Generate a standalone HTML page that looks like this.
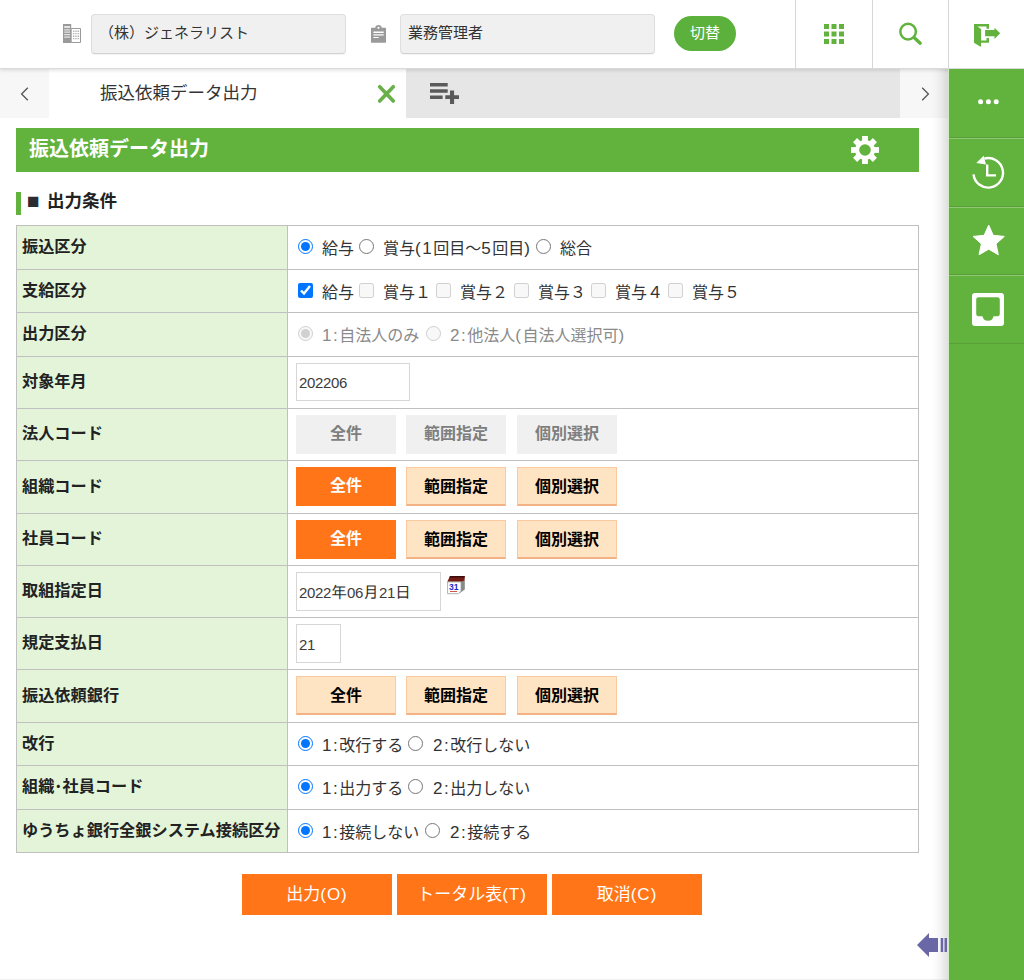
<!DOCTYPE html>
<html lang="ja">
<head>
<meta charset="utf-8">
<meta name="viewport" content="width=1024">
<title>振込依頼データ出力</title>
<style>
*{box-sizing:border-box;margin:0;padding:0}
html,body{width:1024px;height:980px;overflow:hidden;background:#fff}
body{position:relative;font-family:"Liberation Sans","Noto Sans CJK JP",sans-serif;font-size:16px;color:#333;line-height:1}
svg{display:block;position:absolute;overflow:visible}
button{font-family:inherit;border:0;border-radius:0;cursor:pointer;-webkit-appearance:none;appearance:none}
ul{list-style:none}

/* header */
#header{position:absolute;left:0;top:0;width:1024px;height:69px;background:#fff;border-bottom:1px solid #dadada;z-index:5;box-shadow:0 1px 4px rgba(0,0,0,.15)}
.hbox{position:absolute;top:14px;height:40px;width:255px;padding-left:7px;background:#f0f0f0;border:1px solid #dedede;border-bottom-color:#d2d2d2;border-radius:4px;box-shadow:0 1px 1px rgba(0,0,0,.05);font-size:15px;color:#333;line-height:36px;white-space:nowrap}
#switch{position:absolute;left:674px;top:16px;width:62px;height:35px;border-radius:18px;background:#5cb03c;color:#fff;font-size:15px;line-height:20px;text-align:center;padding:0 0 2px}
.hdiv{position:absolute;top:0;width:1px;height:68px;background:#d6d6d6}

/* tab bar */
#tabs{position:absolute;left:0;top:69px;width:949px;height:49px;background:#e6e6e6}
#tabs .arrow{position:absolute;top:0;width:49px;height:49px;background:#f7f7f7}
#tabs .active{position:absolute;left:49px;top:0;width:357px;height:49px;background:#fff}
#tabname{position:absolute;left:51px;top:14px;font-size:17.5px;color:#333;white-space:nowrap;line-height:20px}

/* sidebar */
#side{position:absolute;left:949px;top:69px;width:75px;height:911px;background:#62b33e;z-index:6}
#sshadow{position:absolute;left:930px;top:69px;width:19px;height:911px;z-index:6;background:linear-gradient(to right,rgba(0,0,0,0) 0,rgba(0,0,0,.012) 25%,rgba(0,0,0,.04) 50%,rgba(0,0,0,.085) 75%,rgba(0,0,0,.125) 94.7%,#d3eac6 94.8%,#d3eac6 100%)}
#side li{position:absolute;left:0;width:75px;border-top:1px solid rgba(255,255,255,.28);border-bottom:1px solid rgba(0,0,0,.10)}

/* content */
#title{position:absolute;left:16px;top:128px;width:903px;height:44px;background:#62b33e;color:#fff;font-weight:bold;font-size:20px;line-height:42px;padding-left:13px;white-space:nowrap}
#sec{position:absolute;left:16px;top:192px;height:23px;border-left:5px solid #62b33e;font-size:17.5px;font-weight:bold;color:#222;white-space:nowrap}
#sec b{position:absolute;left:6px;top:-6px;font-size:21px;line-height:30px;font-weight:normal;color:#2b2b33}
#sec span{position:absolute;left:26px;top:-1px;line-height:20px}

#grid{position:absolute;left:16px;top:225px;width:903px;border-collapse:separate;border-spacing:0;border-right:1px solid #c0c0c0;border-bottom:1px solid #c0c0c0;table-layout:fixed}
#grid th,#grid td{border-top:1px solid #c0c0c0;border-left:1px solid #c0c0c0;padding:0}
#grid th{width:271px;background:#e3f4d9;text-align:left;vertical-align:middle;padding:0 0 3px 5px;font-weight:bold;font-size:16.2px;color:#222;white-space:nowrap;line-height:20px}
#grid td{width:631px;position:relative;vertical-align:top;background:#fff}
#grid label{position:absolute;white-space:nowrap;line-height:20px;font-size:16px;color:#333}
#grid label i{font-style:normal;font-size:17px;letter-spacing:1.5px}
#grid label.dis{color:#8a8a8a}
#grid input{position:absolute;width:15px;height:15px;margin:0}

.btn{position:absolute;width:100px;height:39px;font-weight:bold;font-size:16px;text-align:center;line-height:20px;white-space:nowrap;padding:0 0 2px}
.btn.d{background:#f0f0f0;color:#7e7e7e}
.btn.s{background:#ff7518;color:#fff}
.btn.n{background:#ffe4c4;color:#000;border:1px solid #fbc9a0;border-bottom:2px solid #f3b285;padding:1px 0 0}
.inp{position:absolute;left:8px;height:38px;background:#fff;border:1px solid #d6d6d6;font-family:"Liberation Sans","IPAGothic",sans-serif;font-size:16px;color:#2e2e2e;line-height:38px;padding-left:2px;white-space:nowrap}
.inp i{font-style:normal;font-size:15px;letter-spacing:-.35px;color:#3c3c3c}

.big{position:absolute;top:874px;width:150px;height:41px;background:#ff7518;color:#fff;font-size:17px;text-align:center;line-height:20px;white-space:nowrap;padding:0}
.big i{font-style:normal;letter-spacing:1px}
#foot{position:absolute;left:0;top:979px;width:949px;height:1px;background:#f1f1f1}
</style>
</head>
<body>

<header id="header">
  <svg style="left:63px;top:24px" width="18" height="19" viewBox="0 0 18 19"><path fill="#9a9a9a" d="M0 0h8.200v19H0z"/><path fill="#fff" stroke="#9a9a9a" stroke-width="1" d="M8.200 4.500h9.300v14H8.200z"/><path fill="#e4e4e4" d="M1.200 2h5.800v1.900H1.200zM1.200 5.200h5.800v1.200H1.200zM1.200 7.600h5.800v1.200H1.200zM1.200 10.100h5.800v1.200H1.200zM1.200 12.600h5.800v1.200H1.200z"/><path fill="#b5b5b5" d="M10 6.500h1.400v1.500H10zM12.200 6.500h1.400v1.500h-1.400zM14.500 6.500h1.600v1.500h-1.600zM10 9h1.400v1.200H10zM12.200 9h1.400v1.200h-1.400zM14.500 9h1.600v1.200h-1.600zM10 11.400h1.400v1.500H10zM12.200 11.400h1.400v1.500h-1.400zM14.500 11.400h1.600v1.500h-1.600zM10 14h1.400v1.200H10zM12.200 14h1.400v1.200h-1.400zM14.500 14h1.600v1.200h-1.600z"/></svg>
  <div class="hbox" style="left:91px">（株）ジェネラリスト</div>
  <svg style="left:371px;top:25px" width="15" height="18" viewBox="0 0 15 18"><path fill="#9a9a9a" d="M.4 2.800h3.800Q4.600 0 7.500 0t3.300 2.800h3.800a.4.400 0 0 1 .4.400v14.200a.4.400 0 0 1-.4.400H.4a.4.400 0 0 1-.4-.4V3.200a.4.400 0 0 1 .4-.4z"/><circle cx="7.500" cy="2.800" r="1.100" fill="#fff"/><path fill="#fff" d="M2.400 6.600h10.300v1.400H2.400zM2.400 9.200h10.300v1.400H2.400zM2.400 11.900h5.300v1.200H2.400z"/></svg>
  <div class="hbox" style="left:400px">業務管理者</div>
  <button type="button" id="switch">切替</button>
  <div class="hdiv" style="left:795px"></div>
  <div class="hdiv" style="left:872px"></div>
  <div class="hdiv" style="left:948px"></div>
  <svg style="left:824px;top:24px" width="20" height="20" viewBox="0 0 20 20"><path fill="#62b33e" d="M0 0h5v5H0zM7.500 0h5v5h-5zM15 0h5v5h-5zM0 7.500h5v5H0zM7.500 7.500h5v5h-5zM15 7.500h5v5h-5zM0 15h5v5H0zM7.500 15h5v5h-5zM15 15h5v5h-5z"/></svg>
  <svg style="left:899px;top:23px" width="23" height="22" viewBox="0 0 23 22"><circle cx="9.100" cy="8.600" r="7.800" fill="none" stroke="#62b33e" stroke-width="2.500"/><path d="M15 14.600L21.200 20.200" stroke="#62b33e" stroke-width="3.400" stroke-linecap="round"/></svg>
  <svg style="left:974px;top:24px" width="27" height="23" viewBox="0 0 27 23"><path fill="#62b33e" d="M0 0h15v4.700h-2.500V2.400H3.400L7.100 5v11.400h5.400v-2.300H15v4.700H7.100v3.800h-1L0 18.800z"/><path fill="#62b33e" d="M11.100 6h9.400V3.700l5.700 5.600-5.700 5.600v-2.600h-9.400z"/></svg>
</header>

<nav id="tabs">
  <div class="arrow" style="left:0"><svg style="left:20px;top:18px" width="9" height="14" viewBox="0 0 9 14"><path d="M7.800 .8L1.600 7l6.200 6.200" fill="none" stroke="#555" stroke-width="1.300"/></svg></div>
  <div class="active"><div id="tabname">振込依頼データ出力</div><svg style="left:329px;top:16px" width="17" height="18" viewBox="0 0 17 18"><path d="M1.700 1.700l13.600 14.300M15.300 1.700L1.700 16" stroke="#69b048" stroke-width="3.600" stroke-linecap="round"/></svg></div>
  <svg style="left:430px;top:14px" width="29" height="21" viewBox="0 0 29 21"><path fill="#5a5a5a" d="M0 0h17.700v3.500H0zM0 6.300h17.700v3.500H0zM0 12.500h12.600V16H0zM20 7.500h4.100v4.700H29V16h-4.900v5H20v-5h-4.700v-3.800H20z"/></svg>
  <div class="arrow" style="left:900px"><svg style="left:21px;top:18px" width="9" height="14" viewBox="0 0 9 14"><path d="M1.200 .8L7.400 7l-6.200 6.200" fill="none" stroke="#555" stroke-width="1.300"/></svg></div>
</nav>

<div id="sshadow"></div>
<aside id="side">
  <ul>
    <li style="top:0;height:69px;border-top:0"><svg style="left:29px;top:30px" width="21" height="6" viewBox="0 0 21 6"><circle cx="2.600" cy="2.800" r="2.500" fill="#fff"/><circle cx="10.400" cy="2.800" r="2.500" fill="#fff"/><circle cx="18.200" cy="2.800" r="2.500" fill="#fff"/></svg></li>
    <li style="top:69px;height:69px"><svg style="left:22px;top:15px" width="34" height="37" viewBox="0 0 34 37"><path d="M13.400 4.500A14.800 14.800 0 1 1 2.500 20.400" fill="none" stroke="#fff" stroke-width="2.400"/><path fill="#fff" d="M5.300 9L12.700 1.800l2.300 8.600z"/><path d="M16.200 10.400v11h8.800" fill="none" stroke="#fff" stroke-width="2.400"/></svg></li>
    <li style="top:138px;height:68px"><svg style="left:24px;top:17.300px" width="32" height="31" viewBox="0 0 32 31"><path fill="#fff" stroke="#fff" stroke-width="1" stroke-linejoin="round" d="M15.700 .1L20.230 10.270L31.300 11.430L23.020 18.880L25.340 29.770L15.700 24.200L6.060 29.770L8.380 18.880L.1 11.430L11.170 10.270z"/></svg></li>
    <li style="top:206px;height:69px"><svg style="left:23px;top:17px" width="32" height="33" viewBox="0 0 32 33"><path fill="#fff" fill-rule="evenodd" d="M3 0h26a3 3 0 0 1 3 3v27a3 3 0 0 1-3 3H3a3 3 0 0 1-3-3V3a3 3 0 0 1 3-3zM6.500 4.200a2.300 2.300 0 0 0-2.300 2.300v14.400a2.300 2.300 0 0 0 2.300 2.300h4a5.600 5.600 0 0 0 11 0h4a2.300 2.300 0 0 0 2.300-2.300V6.500a2.300 2.300 0 0 0-2.300-2.300z"/></svg></li>
  </ul>
</aside>

<main>
<h1 id="title">振込依頼データ出力</h1>
<svg style="left:851px;top:136px" width="28" height="28" viewBox="-14 -14 28 28"><g fill="#fff"><circle r="10"/><rect x="-2.900" y="-14" width="5.800" height="28"/><rect x="-14" y="-2.900" width="28" height="5.800"/><g transform="rotate(45)"><rect x="-2.900" y="-14" width="5.800" height="28"/><rect x="-14" y="-2.900" width="28" height="5.800"/></g></g><circle r="5.800" fill="#62b33e"/></svg>
<h2 id="sec"><b>■</b><span>出力条件</span></h2>

<table id="grid">
<tbody>
<tr style="height:44px"><th scope="row">振込区分</th><td><input type="radio" name="furikomi" id="furikomi1" checked style="left:10px;top:13px"><label for="furikomi1" style="left:34px;top:13px">給与</label><input type="radio" name="furikomi" id="furikomi2" style="left:71px;top:13px"><label for="furikomi2" style="left:95px;top:13px">賞与<i>(1</i>回目～<i>5</i>回目<i>)</i></label><input type="radio" name="furikomi" id="furikomi3" style="left:248px;top:13px"><label for="furikomi3" style="left:272px;top:13px">総合</label></td></tr>
<tr style="height:43px"><th scope="row">支給区分</th><td><input type="checkbox" name="shikyu" id="shikyu1" checked style="left:10px;top:13px"><label for="shikyu1" style="left:34px;top:13px">給与</label><input type="checkbox" name="shikyu" id="shikyu2" disabled style="left:71px;top:13px"><label for="shikyu2" style="left:95px;top:13px">賞与１</label><input type="checkbox" name="shikyu" id="shikyu3" disabled style="left:148px;top:13px"><label for="shikyu3" style="left:172px;top:13px">賞与２</label><input type="checkbox" name="shikyu" id="shikyu4" disabled style="left:226px;top:13px"><label for="shikyu4" style="left:250px;top:13px">賞与３</label><input type="checkbox" name="shikyu" id="shikyu5" disabled style="left:303px;top:13px"><label for="shikyu5" style="left:327px;top:13px">賞与４</label><input type="checkbox" name="shikyu" id="shikyu6" disabled style="left:380px;top:13px"><label for="shikyu6" style="left:404px;top:13px">賞与５</label></td></tr>
<tr style="height:44px"><th scope="row">出力区分</th><td><input type="radio" name="shutsuryoku" id="shutsuryoku1" checked disabled style="left:10px;top:13px"><label for="shutsuryoku1" class="dis" style="left:34px;top:13px"><i>1:</i>自法人のみ</label><input type="radio" name="shutsuryoku" id="shutsuryoku2" disabled style="left:138px;top:13px"><label for="shutsuryoku2" class="dis" style="left:162px;top:13px"><i>2:</i>他法人<i>(</i>自法人選択可<i>)</i></label></td></tr>
<tr style="height:52px"><th scope="row">対象年月</th><td><div class="inp" style="top:6px;width:114px;height:38px;line-height:38px"><i>202206</i></div></td></tr>
<tr style="height:52px"><th scope="row">法人コード</th><td><button type="button" class="btn d" disabled style="left:8px;top:6px">全件</button><button type="button" class="btn d" disabled style="left:118px;top:6px">範囲指定</button><button type="button" class="btn d" disabled style="left:229px;top:6px">個別選択</button></td></tr>
<tr style="height:53px"><th scope="row">組織コード</th><td><button type="button" class="btn s" style="left:8px;top:6px">全件</button><button type="button" class="btn n" style="left:118px;top:6px">範囲指定</button><button type="button" class="btn n" style="left:229px;top:6px">個別選択</button></td></tr>
<tr style="height:52px"><th scope="row">社員コード</th><td><button type="button" class="btn s" style="left:8px;top:6px">全件</button><button type="button" class="btn n" style="left:118px;top:6px">範囲指定</button><button type="button" class="btn n" style="left:229px;top:6px">個別選択</button></td></tr>
<tr style="height:52px"><th scope="row">取組指定日</th><td><div class="inp" style="top:6px;width:145px;height:39px;line-height:40px"><i>2022</i>年<i>06</i>月<i>21</i>日</div><svg style="left:159px;top:10px" width="18" height="19" viewBox="0 0 18 19"><path fill="#858a86" d="M14 5.500l3.800-1.100v9.200L11.500 18l2.500-3z"/><path fill="#741c13" d="M.3 5.700L3 .1h14.700v4.400L14 5.700z"/><path fill="#3b0d0a" d="M3 .1h14.700v1.500H2.300z"/><path fill="#fff" stroke="#9c9c9c" stroke-width=".8" d="M.6 5.900H14v9.300l-2.600 2.500H.6z"/><text x="6.700" y="14" font-family="Liberation Sans, sans-serif" font-weight="bold" font-size="8.600" fill="#2626cc" text-anchor="middle">31</text><path fill="#cc4433" d="M3 15.100h7v.9H3z"/></svg></td></tr>
<tr style="height:52px"><th scope="row">規定支払日</th><td><div class="inp" style="top:6px;width:45px;height:39px;line-height:40px"><i>21</i></div></td></tr>
<tr style="height:53px"><th scope="row">振込依頼銀行</th><td><button type="button" class="btn n" style="left:8px;top:6px">全件</button><button type="button" class="btn n" style="left:118px;top:6px">範囲指定</button><button type="button" class="btn n" style="left:229px;top:6px">個別選択</button></td></tr>
<tr style="height:43px"><th scope="row">改行</th><td><input type="radio" name="kaigyo" id="kaigyo1" checked style="left:10px;top:13px"><label for="kaigyo1" style="left:34px;top:13px"><i>1:</i>改行する</label><input type="radio" name="kaigyo" id="kaigyo2" style="left:120px;top:13px"><label for="kaigyo2" style="left:145px;top:13px"><i>2:</i>改行しない</label></td></tr>
<tr style="height:44px"><th scope="row">組織･社員コード</th><td><input type="radio" name="code" id="code1" checked style="left:10px;top:13px"><label for="code1" style="left:34px;top:13px"><i>1:</i>出力する</label><input type="radio" name="code" id="code2" style="left:120px;top:13px"><label for="code2" style="left:145px;top:13px"><i>2:</i>出力しない</label></td></tr>
<tr style="height:43px"><th scope="row">ゆうちょ銀行全銀システム接続区分</th><td><input type="radio" name="yucho" id="yucho1" checked style="left:10px;top:13px"><label for="yucho1" style="left:34px;top:13px"><i>1:</i>接続しない</label><input type="radio" name="yucho" id="yucho2" style="left:137px;top:13px"><label for="yucho2" style="left:162px;top:13px"><i>2:</i>接続する</label></td></tr>
</tbody>
</table>

<button type="button" class="big" style="left:242px">出力<i>(O)</i></button>
<button type="button" class="big" style="left:397px">トータル表<i>(T)</i></button>
<button type="button" class="big" style="left:552px">取消<i>(C)</i></button>
</main>

<svg style="left:917px;top:933px;z-index:7" width="31" height="24" viewBox="0 0 31 24"><path fill="#6a67a6" d="M12 0v5h9v14h-9v5L0 12z"/><path fill="#6a67a6" d="M23.700 5h2.500v14h-2.500zM27.500 5H30v14h-2.500z"/></svg>
<div id="foot"></div>
</body>
</html>
